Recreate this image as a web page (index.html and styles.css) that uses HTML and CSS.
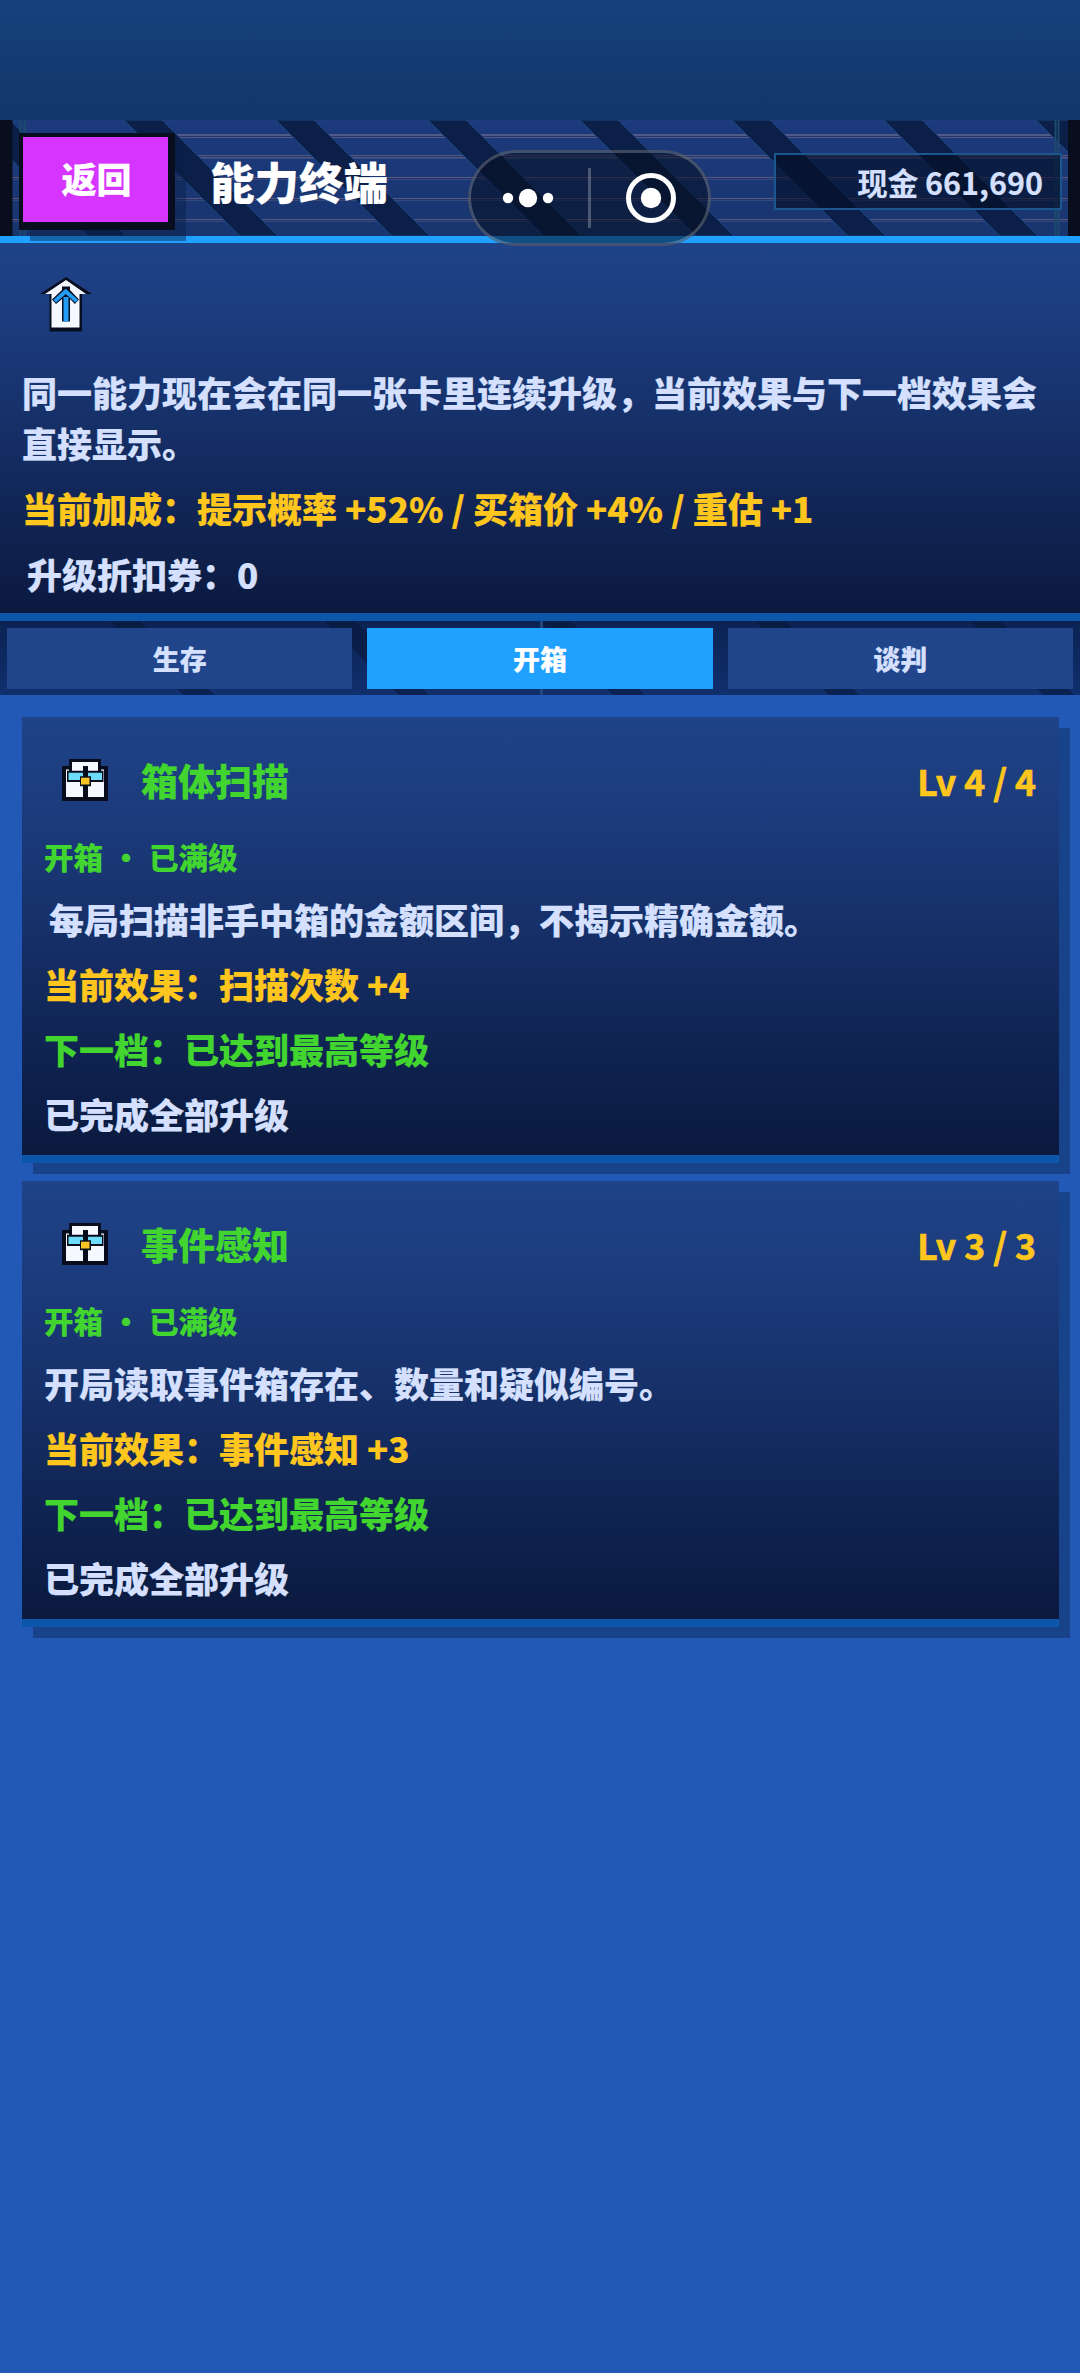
FILE: index.html
```html
<!DOCTYPE html>
<html lang="zh-CN">
<head>
<meta charset="utf-8">
<title>能力终端</title>
<link rel="stylesheet" href="styles.css">
</head>
<body>
<div class="app">
  <div class="status"></div>
  <header class="header">
    <svg class="pattern" width="1080" height="116" viewBox="0 0 1080 116" aria-hidden="true">
      <defs>
        <linearGradient id="hd" x1="0" y1="0" x2="0" y2="1"><stop offset="0" stop-color="#1c3a7c"/><stop offset="1" stop-color="#19356f"/></linearGradient>
        <pattern id="stripe" x="124" y="0" width="152" height="116" patternUnits="userSpaceOnUse">
          <path d="M0 0H38L154 116H116Z M-152 0H-114L2 116H-36Z" fill="#0c1f48" stroke="#16437c"/>
        </pattern>
      </defs>
      <rect width="1080" height="116" fill="url(#hd)"/>
      <path d="M0 14H1068V18H0Z M0 35H1068V38.500H0Z M0 57H1068V59.500H0Z M0 78H1068V80.500H0Z M0 99H1068V101.500H0Z" fill="#505a85"/>
      <path d="M0 16.500H1068 M0 36.500H1068 M0 58.500H1068 M0 79.500H1068 M0 100.500H1068" stroke="#26346a"/>
      <rect width="1080" height="116" fill="url(#stripe)"/>
      <path d="M20.500 0V116M24.500 0V116M1055.500 0V116M1058.500 0V116" stroke="#1c4a6c" stroke-width="2"/>
      <path d="M0 0H12.500V116H0Z M1068 0H1080V116H1068Z" fill="#090e1f"/>
    </svg>
    <button class="back">返回</button>
    <h1 class="title">能力终端</h1>
    <div class="cash">现金 661,690</div>
    <div class="capsule">
      <svg width="243" height="96" viewBox="0 0 243 96" fill="#fff" aria-hidden="true">
        <circle cx="40" cy="48" r="5.200"/><circle cx="60" cy="48" r="9.200"/><circle cx="80" cy="48" r="5.200"/>
        <path d="M120 18H123V78H120Z" opacity=".25"/>
        <circle cx="183" cy="48" r="22.500" fill="none" stroke="#fff" stroke-width="5"/><circle cx="183" cy="48" r="10.200"/>
      </svg>
    </div>
  </header>
  <section class="summary">
    <svg class="up" width="52" height="56" viewBox="0 0 52 56" aria-hidden="true">
      <path d="M26 0L52 17H42V54.500H9.500V17H0Z" fill="#080e20"/><path d="M26 3L46 17H39.500V50.500H11.500V17H5Z" fill="#f6f8ff"/>
      <path d="M22 44.500V22L16 27 12 22.500 22 13V9.500H30V13L39 22.500 35 27 30 22V44.500Z" fill="#080e20"/>
      <path d="M23.500 44.500V20H28.500V44.500Z M13.500 22.700L25.700 11.700 38 22.700 35.500 25.700 25.700 17 16 25.700Z" fill="#249df6"/>
    </svg>
    <p class="line intro">同一能力现在会在同一张卡里连续升级，当前效果与下一档效果会<br>直接显示。</p>
    <p class="line gold">当前加成：提示概率 +52% / 买箱价 +4% / 重估 +1</p>
    <p class="line coupon">升级折扣券：0</p>
  </section>
  <nav class="tabs">
    <a class="tab">生存</a><a class="tab active">开箱</a><a class="tab">谈判</a>
  </nav>
  <main class="cards">
    <article class="card">
      <div class="head">
        <svg class="box" width="46" height="42" viewBox="0 0 46 42" aria-hidden="true"><path d="M7 0H39V7H46V42H0V7H7Z" fill="#080d1e"/><path d="M10 3H36V11.500H10Z M4 10.500H42V38H4Z" fill="#f6f8ff"/><path d="M7 7H10V12H7Z M36 7H39V12H36Z M5 11.700H41.500V23H5Z" fill="#080d1e"/><path d="M6.500 13.700H40V21H6.500Z" fill="#6ddcfa"/><path d="M21 7H26V39H21Z M18 17.300H29V27.300H18Z" fill="#080d1e"/><path d="M19 18.700H27.500V25.500H19Z" fill="#f9c526"/></svg>
        <h2 class="name">箱体扫描</h2><span class="level">Lv 4 / 4</span>
      </div>
      <p class="tag">开箱 · 已满级</p>
      <p class="line inset">每局扫描非手中箱的金额区间，不揭示精确金额。</p>
      <p class="line gold">当前效果：扫描次数 +4</p>
      <p class="line green">下一档：已达到最高等级</p>
      <p class="line">已完成全部升级</p>
    </article>
    <article class="card">
      <div class="head">
        <svg class="box" width="46" height="42" viewBox="0 0 46 42" aria-hidden="true"><path d="M7 0H39V7H46V42H0V7H7Z" fill="#080d1e"/><path d="M10 3H36V11.500H10Z M4 10.500H42V38H4Z" fill="#f6f8ff"/><path d="M7 7H10V12H7Z M36 7H39V12H36Z M5 11.700H41.500V23H5Z" fill="#080d1e"/><path d="M6.500 13.700H40V21H6.500Z" fill="#6ddcfa"/><path d="M21 7H26V39H21Z M18 17.300H29V27.300H18Z" fill="#080d1e"/><path d="M19 18.700H27.500V25.500H19Z" fill="#f9c526"/></svg>
        <h2 class="name">事件感知</h2><span class="level">Lv 3 / 3</span>
      </div>
      <p class="tag">开箱 · 已满级</p>
      <p class="line">开局读取事件箱存在、数量和疑似编号。</p>
      <p class="line gold">当前效果：事件感知 +3</p>
      <p class="line green">下一档：已达到最高等级</p>
      <p class="line">已完成全部升级</p>
    </article>
  </main>
</div>
</body>
</html>
```
FILE: styles.css
```css
* { box-sizing: border-box; margin: 0; padding: 0; }
body { background: #2259b6; font-family: "Noto Sans CJK SC", sans-serif; font-weight: 900; color: #d5e0ff; -webkit-text-stroke: .15px; }
.app { width: 1080px; height: 2373px; overflow: hidden; }
.status { height: 120px; background: linear-gradient(#15417b, #13366b); }
.header { position: relative; height: 123px; border-bottom: 7px solid #20a0ff; display: flex; align-items: flex-start; z-index: 1; }
.pattern { position: absolute; left: 0; top: 0; z-index: -1; }
.back { margin: 13px 0 0 19px; width: 156px; height: 97px; border: solid #090e1f; border-width: 4px 7px 8px 4px; background: #d535ff; color: #fff; font: inherit; font-size: 35px; line-height: 80px; padding: 0 0 3px 2px; box-shadow: 11px 11px 0 rgba(8, 30, 70, .45); }
.title { margin: 28px 0 0 35px; font-size: 44.500px; line-height: 66px; color: #fff; font-weight: 900; }
.cash { margin: 33px 18px 0 auto; width: 288px; height: 57px; border: 2px solid #1b568f; background: rgba(4, 12, 35, .6); font-size: 30.500px; font-weight: 700; line-height: 54px; text-align: right; padding-right: 17px; }
.capsule { position: absolute; left: 468px; top: 30px; width: 243px; height: 96px; border-radius: 48px; background: rgba(4, 12, 30, .55); box-shadow: inset 0 0 0 3px rgba(255, 255, 255, .22); }
.capsule svg { display: block; }
.summary { height: 378px; border-bottom: 8px solid #0c57a9; padding: 34px 22px 0; background: linear-gradient(#1f4389, #1a3877 30%, #0b193f); }
.up { display: block; margin-left: 18px; }
.line { font-size: 35px; line-height: 52px; height: 65px; white-space: nowrap; }
.intro { height: 116px; margin-top: 33px; line-height: 51px; }
.gold { color: #ffc61e; }
.green { color: #43d52f; }
.coupon { padding: 1px 0 0 5px; }
.tabs {
  height: 74px; display: grid; grid-template-columns: repeat(3, 1fr); gap: 15px; padding: 7px 7px;
  background:
    linear-gradient(#23477c, #23477c) 540px 0 / 3px 100% no-repeat,
    repeating-linear-gradient(45deg, transparent 0 130px, rgba(5, 18, 48, .45) 130px 152px),
    linear-gradient(#0b2353, #102f6d);
}
.tab { background: #20458a; font-size: 27px; line-height: 61px; text-align: center; z-index: 1; }
.tab.active { background: #20a0ff; color: #fff; }
.cards { padding: 22px 22px; display: flex; flex-direction: column; gap: 18px; }
.card { width: 1037px; height: 446px; padding: 30px 23px 0 22px; border-bottom: 8px solid #0c57a9; background: linear-gradient(#1f4389, #1a3877 30%, #0a193e); box-shadow: 11px 11px 0 #18438a; }
.head { height: 66px; display: flex; align-items: center; margin-bottom: 21px; }
.box { margin: -1px 0 0 18px; }
.name { margin-left: 33px; font-size: 37px; color: #43d52f; font-weight: 900; }
.level { margin-left: auto; font-size: 35.500px; font-weight: 700; -webkit-text-stroke: .7px; color: #ffc61e; }
.tag { font-size: 29.500px; line-height: 44px; height: 59px; color: #43d52f; word-spacing: 1.500px; }
.inset { padding-left: 5px; }
```
